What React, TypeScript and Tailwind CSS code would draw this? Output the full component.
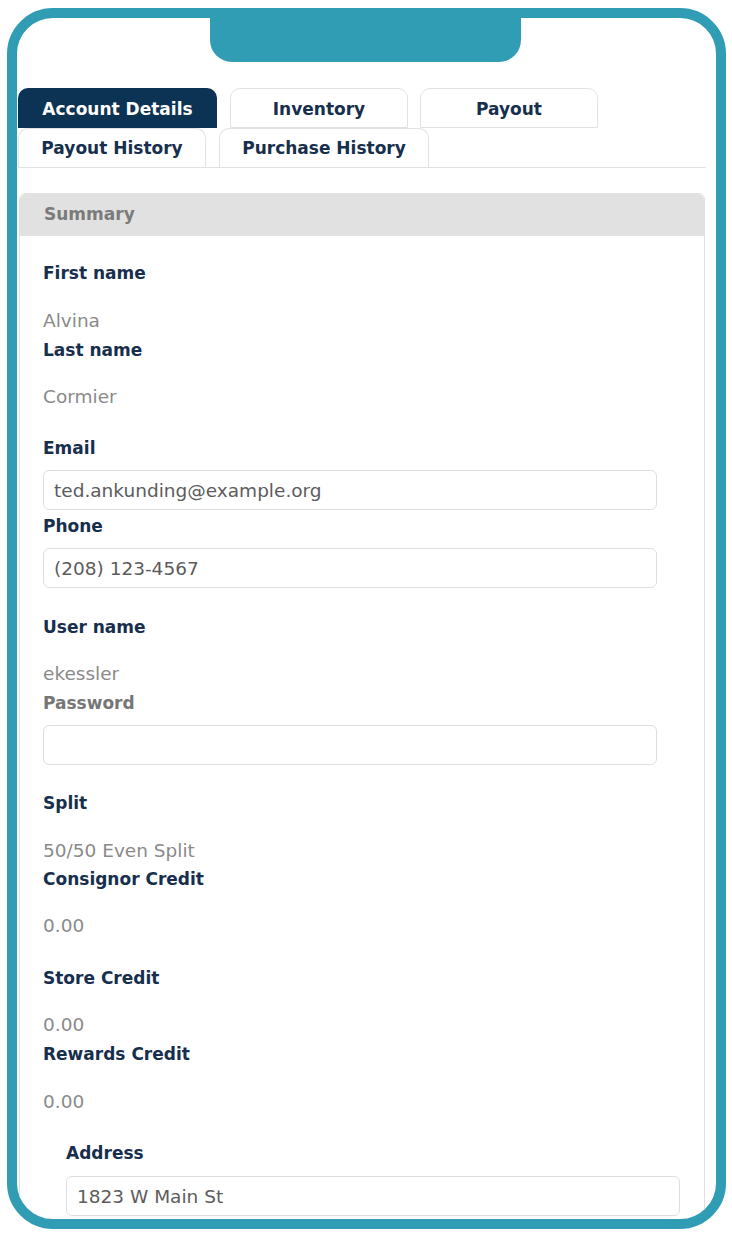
import React from "react";

const font = { fontFamily: '"DejaVu Sans", "Liberation Sans", sans-serif' };

function Label({ children, muted, className = "" }: { children: React.ReactNode; muted?: boolean; className?: string }) {
  return (
    <div className={`h-6 leading-6 text-[17px] font-bold ${muted ? "text-[#767676]" : "text-[#172f4d]"} ${className}`}>
      {children}
    </div>
  );
}

function Value({ children, className = "" }: { children: React.ReactNode; className?: string }) {
  return <div className={`h-6 leading-6 text-[18.5px] text-[#8a8a8a] ${className}`}>{children}</div>;
}

function TextInput({ value, className = "" }: { value: string; className?: string }) {
  return (
    <input
      readOnly
      defaultValue={value}
      className={`block h-10 w-[614px] rounded-md border border-[#dedede] bg-white px-[10px] text-[18.5px] text-[#5c5c5c] outline-none ${className}`}
    />
  );
}

const tabBase = "flex h-full items-center justify-center rounded-t-[10px] text-[17px] font-bold";
const inactive = `${tabBase} border border-[#e2e2e2] bg-white text-[#172f4d]`;

export default function App() {
  return (
    <div className="h-[1236px] w-[732px] bg-white pl-[7px] pr-[6px] pt-[8px]" style={font}>
      <div className="flex h-[1221px] flex-col overflow-hidden rounded-[46px] border-[10px] border-[#319db5] bg-white">
        {/* notch */}
        <div className="flex justify-center">
          <div className="ml-[-2px] h-[44px] w-[311px] rounded-b-[22px] bg-[#319db5]" />
        </div>

        <div className="mt-[26px] pl-[1px] pr-[10px]">
          {/* tabs */}
          <div className="flex h-[40px] gap-[12px]">
            <div className={`${tabBase} w-[199px] bg-[#0d3354] pt-1 text-white`}>Account Details</div>
            <div className={`${inactive} ml-px w-[178px] pt-1`}>Inventory</div>
            <div className={`${inactive} w-[178px] pt-1`}>Payout</div>
          </div>
          <div className="flex h-[40px] gap-[13px] border-b border-[#e2e2e2]">
            <div className={`${inactive} w-[188px] border-b-0 pt-[2px]`}>Payout History</div>
            <div className={`${inactive} w-[210px] border-b-0 pt-[2px]`}>Purchase History</div>
          </div>

          {/* summary card */}
          <div className="mx-px mt-[25px] rounded-t-md border border-[#e0e0e0]">
            <div className="flex h-[42px] items-center rounded-t-md bg-[#e1e1e1] pl-[24px] text-[17px] font-bold text-[#7b7b7b]">
              Summary
            </div>
            <div className="pl-[23px] pt-[25px] pb-10">
              <Label>First name</Label>
              <Value className="mt-6">Alvina</Value>
              <Label className="mt-[5px]">Last name</Label>
              <Value className="mt-[23px]">Cormier</Value>

              <Label className="mt-[27px]">Email</Label>
              <TextInput className="mt-[10px]" value="ted.ankunding@example.org" />
              <Label className="mt-[4px]">Phone</Label>
              <TextInput className="mt-[10px]" value="(208) 123-4567" />

              <Label className="mt-[27px]">User name</Label>
              <Value className="mt-[23px]">ekessler</Value>
              <Label muted className="mt-[5px]">Password</Label>
              <TextInput className="mt-[10px]" value="" />

              <Label className="mt-[26px]">Split</Label>
              <Value className="mt-6">50/50 Even Split</Value>
              <Label className="mt-[4px]">Consignor Credit</Label>
              <Value className="mt-[23px]">0.00</Value>

              <Label className="mt-[28px]">Store Credit</Label>
              <Value className="mt-[23px]">0.00</Value>
              <Label className="mt-[5px]">Rewards Credit</Label>
              <Value className="mt-6">0.00</Value>

              <div className="mt-[27px] pl-[23px]">
                <Label>Address</Label>
                <TextInput className="mt-[11px]" value="1823 W Main St" />
              </div>
            </div>
          </div>
        </div>
      </div>
    </div>
  );
}
